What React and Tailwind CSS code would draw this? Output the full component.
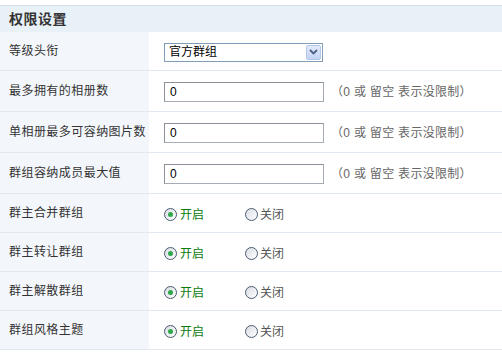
import React, { useState } from "react";

const fontCn = "font-['Liberation_Sans','Noto_Sans_CJK_SC',sans-serif]";

const InputRow = ({ label, value }) => (
  <div className="flex h-[41px] border-b border-[#e1e8f0]">
    <div className="w-[149px] shrink-0 bg-[#f3f7fc] pl-[9px] flex items-center text-[12px] tracking-[0.45px] text-[#333]">
      {label}
    </div>
    <div className="flex-1 flex items-center pl-[15px] pt-[2px]">
      <input
        type="text"
        defaultValue={value}
        className="w-[160px] h-[20px] border border-[#a5acb5] border-t-[#8c9299] border-l-[#8c9299] px-[5px] text-[12px] text-black outline-none"
      />
      <span className="ml-[7px] text-[12px] text-[#666] tracking-[0.3px]">
        （0 或 留空 表示没限制）
      </span>
    </div>
  </div>
);

const Radio = ({ checked }) => (
  <span className="w-[13px] h-[13px] rounded-full border border-[#4a5b70] bg-gradient-to-br from-[#d8dde3] to-white flex items-center justify-center">
    {checked && <span className="w-[5px] h-[5px] rounded-full bg-[#2ea84a]" />}
  </span>
);

const RadioRow = ({ label }) => {
  const [on, setOn] = useState(true);
  return (
    <div className="flex h-[39px] border-b border-[#e1e8f0]">
      <div className="w-[149px] shrink-0 bg-[#f3f7fc] pl-[9px] flex items-center text-[12px] tracking-[0.45px] text-[#333]">
        {label}
      </div>
      <div className="flex-1 flex items-center pl-[15px] pt-[3px]">
        <label className="flex items-center gap-[3px] w-[81px] cursor-pointer" onClick={() => setOn(true)}>
          <Radio checked={on} />
          <span className="text-[12px] text-[#0a7a0a]">开启</span>
        </label>
        <label className="flex items-center gap-[2px] cursor-pointer" onClick={() => setOn(false)}>
          <Radio checked={!on} />
          <span className="text-[12px] text-[#555]">关闭</span>
        </label>
      </div>
    </div>
  );
};

export default function App() {
  return (
    <div className={`w-[502px] h-[353px] bg-white overflow-hidden ${fontCn}`}>
      <div className="h-[5px]" />
      {/* section header */}
      <div className="h-[27px] border-t border-[#d3dde8] bg-[#e8f0f8] flex items-center pl-[9px]">
        <h3 className="text-[14px] font-bold text-[#333] tracking-[0.5px]">权限设置</h3>
      </div>

      <div className="flex h-[39px] border-b border-[#e1e8f0]">
        <div className="w-[149px] shrink-0 bg-[#f3f7fc] pl-[9px] flex items-center text-[12px] tracking-[0.45px] text-[#333]">
          等级头衔
        </div>
        <div className="flex-1 flex items-center pl-[15px] pt-[2px]">
          <div className="w-[159px] h-[19px] border border-[#7f9db9] flex items-center justify-between pl-[4px] pr-[1px] bg-white">
            <span className="text-[12px] text-black">官方群组</span>
            <span className="w-[15px] h-[15px] rounded-[2px] border border-[#b3c6e6] bg-gradient-to-b from-[#e3ebfb] to-[#c2d3f5] flex items-center justify-center">
              <svg width="9" height="6" viewBox="0 0 9 6">
                <path d="M1 1l3.5 3.5L8 1" stroke="#4d6185" strokeWidth="1.8" fill="none" />
              </svg>
            </span>
          </div>
        </div>
      </div>

      <InputRow label="最多拥有的相册数" value="0" />
      <InputRow label="单相册最多可容纳图片数" value="0" />
      <InputRow label="群组容纳成员最大值" value="0" />
      <RadioRow label="群主合并群组" />
      <RadioRow label="群主转让群组" />
      <RadioRow label="群主解散群组" />
      <RadioRow label="群组风格主题" />
    </div>
  );
}
